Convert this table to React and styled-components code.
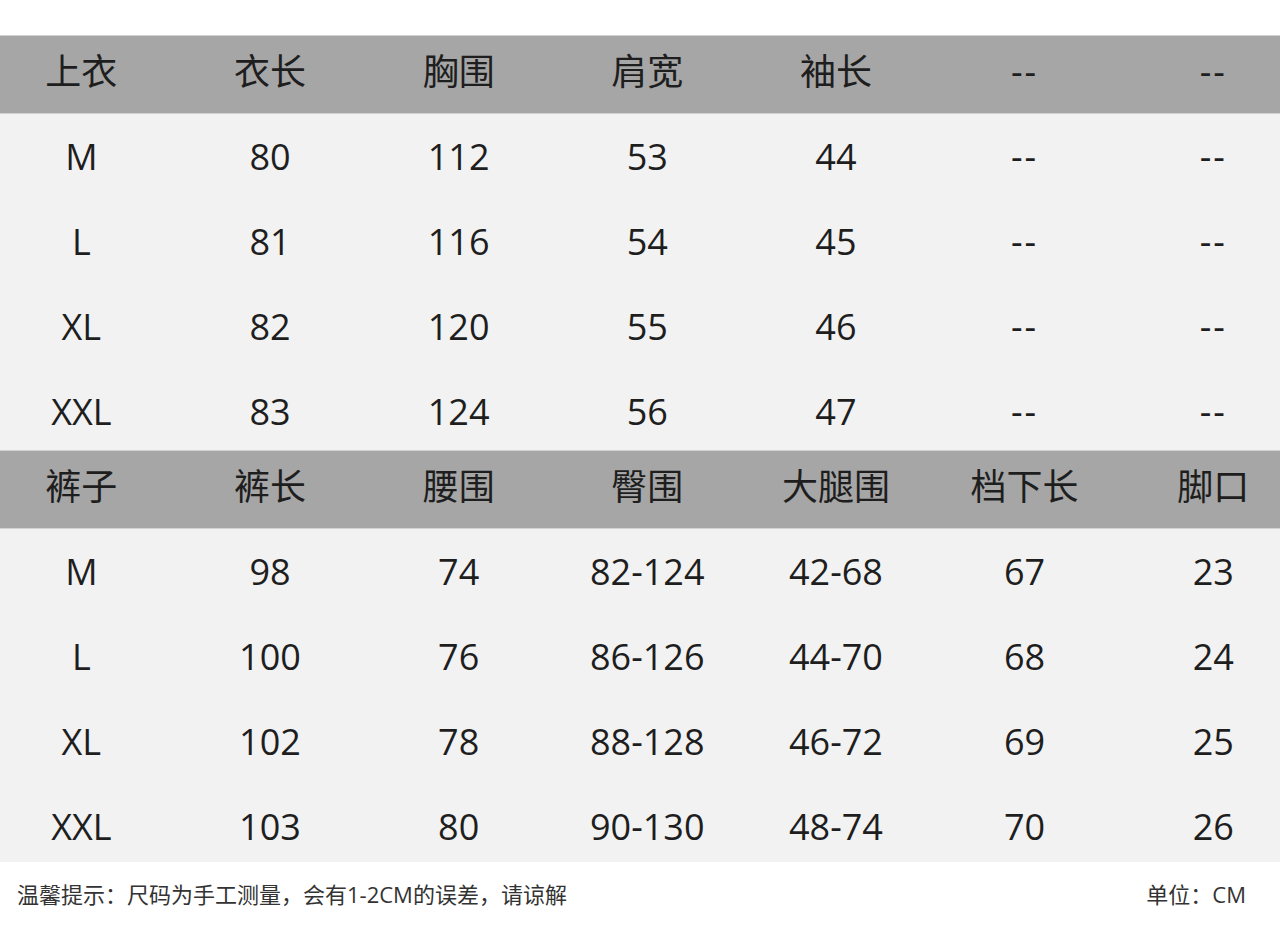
import React from 'react';
import styled, { createGlobalStyle } from 'styled-components';

const GlobalStyle = createGlobalStyle`
  html, body {
    margin: 0;
    padding: 0;
    background: #ffffff;
  }
  body {
    font-family: "Open Sans", "Noto Sans CJK SC", sans-serif;
    color: #1f1f1f;
    overflow: hidden;
  }
`;

const tops = {
  head: ['上衣', '衣长', '胸围', '肩宽', '袖长', '--', '--'],
  rows: [
    ['M', '80', '112', '53', '44', '--', '--'],
    ['L', '81', '116', '54', '45', '--', '--'],
    ['XL', '82', '120', '55', '46', '--', '--'],
    ['XXL', '83', '124', '56', '47', '--', '--'],
  ],
};

const pants = {
  head: ['裤子', '裤长', '腰围', '臀围', '大腿围', '档下长', '脚口'],
  rows: [
    ['M', '98', '74', '82-124', '42-68', '67', '23'],
    ['L', '100', '76', '86-126', '44-70', '68', '24'],
    ['XL', '102', '78', '88-128', '46-72', '69', '25'],
    ['XXL', '103', '80', '90-130', '48-74', '70', '26'],
  ],
};

// text in the original drifts down ~1-2px per row, so nudge each row a bit
const SizeTable = ({ data, rowHeight, drift }) => (
  <Section>
    <HeadRow>
      {data.head.map((cell, i) => (
        <Cell key={i} dash={cell === '--'}>{cell}</Cell>
      ))}
    </HeadRow>
    {data.rows.map((row, r) => (
      <BodyRow key={row[0]} height={rowHeight} shift={1 + r * drift}>
        {row.map((cell, i) => (
          <Cell key={i} dash={cell === '--'}>{cell}</Cell>
        ))}
      </BodyRow>
    ))}
  </Section>
);

const App = () => (
  <Page>
    <GlobalStyle />
    <SizeTable data={tops} rowHeight={84} drift={1} />
    <SizeTable data={pants} rowHeight={83.25} drift={2} />
    <Footer>
      <Note>温馨提示：尺码为手工测量，会有1-2CM的误差，请谅解</Note>
      <Note>单位：CM</Note>
    </Footer>
  </Page>
);

export default App;

const Page = styled.div`
  width: 1280px;
  height: 932px;
  padding-top: 35px;
  box-sizing: border-box;
  overflow: hidden;
  background: #ffffff;
`;

const Section = styled.div`
  display: flex;
  flex-direction: column;
`;

const Row = styled.div`
  display: grid;
  grid-template-columns: repeat(7, 188.67px);
  width: 1320px;
  margin-left: -13px;
  align-items: center;
  justify-items: center;
  box-sizing: border-box;
`;

const HeadRow = styled(Row)`
  height: 79px;
  background: #a6a6a6;
  border-top: 1px solid #d2d2d2;
  border-bottom: 1px solid #d2d2d2;
  padding-bottom: 6px;
`;

const BodyRow = styled(Row)`
  height: ${({ height }) => height}px;
  background: #f2f2f2;
  padding-top: ${({ shift }) => shift * 2}px;
`;

const Cell = styled.div`
  font-size: 36px;
  line-height: 1;
  white-space: nowrap;
  color: #1e1e1e;
  letter-spacing: ${({ dash }) => (dash ? '2px' : '0')};
`;

const Footer = styled.div`
  display: flex;
  justify-content: space-between;
  align-items: center;
  height: 62px;
  padding: 0 34px 0 17px;
`;

const Note = styled.span`
  font-size: 22px;
  color: #333333;
  white-space: nowrap;
`;
